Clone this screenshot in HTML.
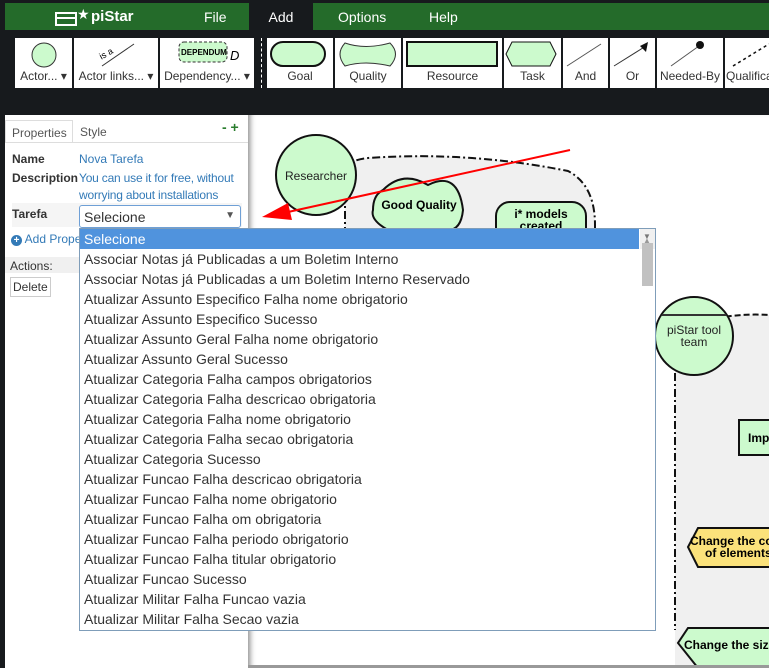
<!DOCTYPE html>
<html><head><meta charset="utf-8"><style>
*{box-sizing:border-box;margin:0;padding:0}
body{width:769px;height:668px;background:#171a1d;font-family:"Liberation Sans",sans-serif;position:relative;overflow:hidden}
.top{position:absolute;left:5px;top:3px;width:764px;height:27px;background:#246b2a;color:#fff;font-size:14px}
.top span{position:absolute;top:6px}
.tab{position:absolute;left:249px;top:3px;width:64px;height:28px;background:#171a1d;color:#fff;font-size:14px;text-align:center;padding-top:6px}
.tool{position:absolute;top:38px;height:50px;background:#fff;font-size:12px;color:#333;text-align:center}
.tool .l{position:absolute;bottom:5px;left:0;right:0;white-space:nowrap}
.panel{position:absolute;left:5px;top:115px;width:243px;height:553px;background:#fff;font-size:12px}
.canvas{position:absolute;left:248px;top:115px;width:521px;height:553px;background:#fff;box-shadow:inset 6px 0 6px -4px #888}
.dd{position:absolute;left:79px;top:228px;width:577px;height:403px;background:#fff;border:1px solid #7f9db9;font-size:14px;color:#333;overflow:hidden}
.dd div{height:20px;line-height:20px;padding-left:4px;white-space:nowrap}
.dd .sel{background:#5093dd;color:#fff;margin-right:16px}
.sb{position:absolute;right:0;top:0;width:15px;height:401px;background:#f0f0f0}
</style></head><body>
<div class="top">
<svg style="position:absolute;left:50px;top:4px" width="36" height="20"><rect x="1" y="6" width="20" height="12" fill="none" stroke="#fff" stroke-width="2"/><line x1="1" y1="11" x2="21" y2="11" stroke="#fff" stroke-width="2"/><text x="22" y="12" fill="#fff" font-size="14">★</text></svg>
<span style="left:86px;font-weight:bold;font-size:15px;top:5px">piStar</span>
<span style="left:199px">File</span>
<span style="left:333px">Options</span>
<span style="left:424px">Help</span>
</div>
<div class="tab">Add</div>
<div class="tool" style="left:15px;width:57px"><svg width="57" height="30"><circle cx="29" cy="17" r="12" fill="#ccfacd" stroke="#333"/></svg><div class="l">Actor... ▾</div></div>
<div class="tool" style="left:74px;width:84px"><svg width="84" height="30"><line x1="28" y1="28" x2="60" y2="6" stroke="#333"/><text x="26" y="20" font-size="9" transform="rotate(-30 30 18)">is a</text></svg><div class="l">Actor links... ▾</div></div>
<div class="tool" style="left:160px;width:94px"><svg width="94" height="30"><rect x="19" y="4" width="48" height="20" rx="5" fill="#ccfacd" stroke="#333" stroke-dasharray="3,2"/><text x="21" y="17" font-size="8" font-weight="bold">DEPENDUM</text><text x="70" y="22" font-size="13" font-style="italic">D</text></svg><div class="l">Dependency... ▾</div></div>
<div style="position:absolute;left:261px;top:38px;height:50px;border-left:1px dashed #fff"></div>
<div class="tool" style="left:267px;width:66px"><svg width="66" height="30"><rect x="4" y="4" width="54" height="24" rx="12" fill="#ccfacd" stroke="#111" stroke-width="2"/></svg><div class="l">Goal</div></div>
<div class="tool" style="left:335px;width:66px"><svg width="66" height="30"><path d="M10 5 Q30 12 55 5 Q66 16 55 28 Q30 22 10 28 Q0 16 10 5Z" fill="#ccfacd" stroke="#333"/></svg><div class="l">Quality</div></div>
<div class="tool" style="left:403px;width:99px"><svg width="99" height="30"><rect x="4" y="4" width="90" height="24" fill="#ccfacd" stroke="#111" stroke-width="2"/></svg><div class="l">Resource</div></div>
<div class="tool" style="left:504px;width:57px"><svg width="57" height="30"><path d="M8 4 H46 L52 16 L46 28 H8 L2 16Z" fill="#ccfacd" stroke="#111"/></svg><div class="l">Task</div></div>
<div class="tool" style="left:563px;width:45px"><svg width="45" height="30"><line x1="4" y1="28" x2="38" y2="6" stroke="#555"/></svg><div class="l">And</div></div>
<div class="tool" style="left:610px;width:45px"><svg width="45" height="30"><line x1="4" y1="28" x2="36" y2="8" stroke="#333"/><path d="M38 4 L30 8 L36 14Z" fill="#111"/></svg><div class="l">Or</div></div>
<div class="tool" style="left:657px;width:66px"><svg width="66" height="30"><line x1="14" y1="28" x2="42" y2="8" stroke="#555"/><circle cx="43" cy="7" r="4" fill="#111"/></svg><div class="l">Needed-By</div></div>
<div class="tool" style="left:725px;width:44px;text-align:left"><svg width="44" height="30"><line x1="8" y1="28" x2="44" y2="6" stroke="#111" stroke-dasharray="3,3" stroke-width="1.5"/></svg><div class="l" style="text-align:left;padding-left:1px">Qualifica</div></div>

<div class="canvas">
<svg width="521" height="553" style="position:absolute;left:0;top:0">
<path d="M97 120 V60 Q97 45 120 43 Q220 36 320 56 Q347 70 347 110 V120Z" fill="#f0f0f0" stroke="#111" stroke-width="2" stroke-dasharray="8,3,2,3"/>
<circle cx="68" cy="60" r="40" fill="#ccfacd" stroke="#111" stroke-width="2"/>
<text x="68" y="65" text-anchor="middle" font-size="12" fill="#222">Researcher</text>
<path d="M135 75 Q155 55 180 70 Q210 55 215 95 Q213 115 200 115 L140 115 Q122 105 125 95 Q125 80 135 75Z" fill="#ccfacd" stroke="#111" stroke-width="2"/>
<text x="171" y="94" text-anchor="middle" font-size="12" font-weight="bold">Good Quality</text>
<rect x="248" y="87" width="90" height="40" rx="14" fill="#ccfacd" stroke="#111" stroke-width="2"/>
<text x="293" y="103" text-anchor="middle" font-size="12" font-weight="bold">i* models</text>
<text x="293" y="115" text-anchor="middle" font-size="12" font-weight="bold">created</text>
<line x1="322" y1="35" x2="40" y2="97" stroke="#f00" stroke-width="2"/>
<path d="M14 102 L40 88 L44 105Z" fill="#f00"/>
<path d="M427 210 Q427 200 460 205 Q490 198 521 200 V553 H427Z" fill="#f0f0f0"/>
<path d="M427 210 V515" stroke="#111" stroke-width="2" stroke-dasharray="8,3,2,3"/>
<path d="M460 205 Q490 198 521 200" fill="none" stroke="#111" stroke-width="2" stroke-dasharray="6,3"/>
<circle cx="446" cy="221" r="39" fill="#ccfacd" stroke="#111" stroke-width="2"/>
<line x1="414" y1="200" x2="478" y2="200" stroke="#333" stroke-width="2"/>
<text x="446" y="219" text-anchor="middle" font-size="12" fill="#222">piStar tool</text>
<text x="446" y="231" text-anchor="middle" font-size="12" fill="#222">team</text>
<rect x="491" y="305" width="40" height="35" fill="#ccfacd" stroke="#111" stroke-width="2"/>
<text x="500" y="327" font-size="12" font-weight="bold">Imp</text>
<path d="M450 413 H530 V452 H450 L440 432Z" fill="#fbe27b" stroke="#111" stroke-width="2"/>
<text x="442" y="430" font-size="12" font-weight="bold">Change the co</text>
<text x="457" y="442" font-size="12" font-weight="bold">of elements</text>
<path d="M440 513 H530 V553 H450 L430 528Z" fill="#ccfacd" stroke="#111" stroke-width="2"/>
<text x="436" y="534" font-size="12" font-weight="bold">Change the siz</text>
<rect x="0" y="550" width="521" height="3" fill="#999"/>
</svg>
</div>

<div class="panel">
<div style="position:absolute;left:0;top:5px;width:68px;height:22px;border:1px solid #ddd;border-bottom:none;background:#fff;padding:5px 0 0 6px;color:#555">Properties</div>
<div style="position:absolute;left:75px;top:10px;color:#555">Style</div>
<div style="position:absolute;left:217px;top:4px;color:#2a7d2e;font-weight:bold;font-size:14px">- +</div>
<div style="position:absolute;left:0;top:27px;width:243px;border-top:1px solid #ddd"></div>
<div style="position:absolute;left:7px;top:37px;font-weight:bold;color:#333">Name</div>
<div style="position:absolute;left:74px;top:37px;color:#337ab7">Nova Tarefa</div>
<div style="position:absolute;left:7px;top:56px;font-weight:bold;color:#333">Description</div>
<div style="position:absolute;left:74px;top:55px;color:#337ab7;line-height:17px;letter-spacing:-0.2px">You can use it for free, without<br>worrying about installations</div>
<div style="position:absolute;left:7px;top:88px;width:230px;height:24px;background:#f5f5f5"></div>
<div style="position:absolute;left:7px;top:92px;font-weight:bold;color:#333">Tarefa</div>
<div style="position:absolute;left:74px;top:90px;width:162px;height:23px;border:1px solid #6fa0d6;border-radius:3px;background:#fff;font-size:14px;color:#333;padding:3px 0 0 4px">Selecione<span style="position:absolute;right:5px;top:4px;font-size:10px;color:#555">▼</span></div>
<div style="position:absolute;left:6px;top:117px;color:#337ab7;font-size:12px"><span style="display:inline-block;width:11px;height:11px;border-radius:50%;background:#337ab7;color:#fff;font-size:10px;line-height:11px;text-align:center;font-weight:bold">+</span> Add Prope</div>
<div style="position:absolute;left:0;top:142px;width:243px;height:16px;background:#f0f0f0;padding:2px 0 0 5px;color:#333">Actions:</div>
<div style="position:absolute;left:5px;top:162px;border:1px solid #ccc;padding:2px 2px;color:#333">Delete</div>
</div>

<div class="dd">
<div class="sel">Selecione</div>
<div>Associar Notas já Publicadas a um Boletim Interno</div>
<div>Associar Notas já Publicadas a um Boletim Interno Reservado</div>
<div>Atualizar Assunto Especifico Falha nome obrigatorio</div>
<div>Atualizar Assunto Especifico Sucesso</div>
<div>Atualizar Assunto Geral Falha nome obrigatorio</div>
<div>Atualizar Assunto Geral Sucesso</div>
<div>Atualizar Categoria Falha campos obrigatorios</div>
<div>Atualizar Categoria Falha descricao obrigatoria</div>
<div>Atualizar Categoria Falha nome obrigatorio</div>
<div>Atualizar Categoria Falha secao obrigatoria</div>
<div>Atualizar Categoria Sucesso</div>
<div>Atualizar Funcao Falha descricao obrigatoria</div>
<div>Atualizar Funcao Falha nome obrigatorio</div>
<div>Atualizar Funcao Falha om obrigatoria</div>
<div>Atualizar Funcao Falha periodo obrigatorio</div>
<div>Atualizar Funcao Falha titular obrigatorio</div>
<div>Atualizar Funcao Sucesso</div>
<div>Atualizar Militar Falha Funcao vazia</div>
<div>Atualizar Militar Falha Secao vazia</div>
<div class="sb"><div style="position:absolute;left:2px;top:14px;width:11px;height:43px;background:#c1c1c1"></div><span style="position:absolute;left:3px;top:2px;font-size:8px;color:#999">▲</span><span style="position:absolute;left:3px;bottom:2px;font-size:8px;color:#777">▼</span></div>
</div>
</body></html>
